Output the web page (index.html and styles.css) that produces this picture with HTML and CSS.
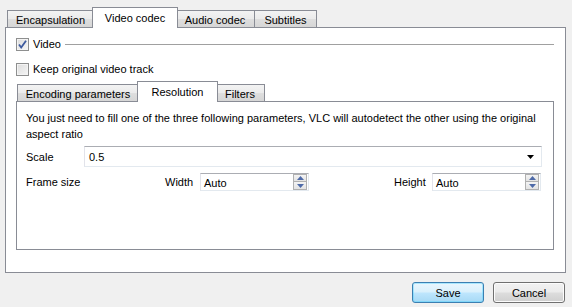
FILE: index.html
```html
<!DOCTYPE html>
<html>
<head>
<meta charset="utf-8">
<link rel="stylesheet" href="styles.css">
</head>
<body>
<div class="dialog">
  <div class="tabbar outer-bar">
    <div class="tab t-encap">Encapsulation</div>
    <div class="tab sel t-video">Video codec</div>
    <div class="tab t-audio">Audio codec</div>
    <div class="tab t-subs">Subtitles</div>
  </div>
  <div class="pane outer-pane">
    <div class="check-row video-row">
      <span class="cb checked">
        <svg width="11" height="11" viewBox="0 0 11 11"><path d="M2 5.5 L4.2 8.5 L9 1.8" fill="none" stroke="#3d5a9e" stroke-width="1.8"/></svg>
      </span>
      <span class="cb-label">Video</span>
      <span class="group-line"></span>
    </div>
    <div class="check-row keep-row">
      <span class="cb"></span>
      <span class="cb-label">Keep original video track</span>
    </div>
    <div class="inner">
      <div class="tabbar inner-bar">
        <div class="tab t-enc">Encoding parameters</div>
        <div class="tab sel t-res">Resolution</div>
        <div class="tab t-fil">Filters</div>
      </div>
      <div class="pane inner-pane">
        <p class="hint">You just need to fill one of the three following parameters, VLC will autodetect the other using the original aspect ratio</p>
        <div class="row scale-row">
          <span class="lbl scale-lbl">Scale</span>
          <div class="combo">
            <span>0.5</span>
            <svg class="arrow" width="8" height="4" viewBox="0 0 8 4"><path d="M0 0 H7 L3.5 4 Z" fill="#000"/></svg>
          </div>
        </div>
        <div class="row frame-row">
          <span class="lbl frame-lbl">Frame size</span>
          <span class="lbl width-lbl">Width</span>
          <div class="spin">
            <span class="spin-val">Auto</span>
            <span class="spin-btns">
              <span class="sb"><svg width="7" height="4" viewBox="0 0 7 4"><path d="M0 4 H7 L3.5 0 Z" fill="#4e6aa8"/></svg></span>
              <span class="sb"><svg width="7" height="4" viewBox="0 0 7 4"><path d="M0 0 H7 L3.5 4 Z" fill="#4e6aa8"/></svg></span>
            </span>
          </div>
          <span class="lbl height-lbl">Height</span>
          <div class="spin">
            <span class="spin-val">Auto</span>
            <span class="spin-btns">
              <span class="sb"><svg width="7" height="4" viewBox="0 0 7 4"><path d="M0 4 H7 L3.5 0 Z" fill="#4e6aa8"/></svg></span>
              <span class="sb"><svg width="7" height="4" viewBox="0 0 7 4"><path d="M0 0 H7 L3.5 4 Z" fill="#4e6aa8"/></svg></span>
            </span>
          </div>
        </div>
      </div>
    </div>
  </div>
  <div class="buttons">
    <button class="btn default">Save</button>
    <button class="btn">Cancel</button>
  </div>
</div>
</body>
</html>
```

FILE: styles.css
```css
* { box-sizing: border-box; }
html, body { margin: 0; padding: 0; }
body {
  background: #f0f0f0;
  font-family: "Liberation Sans", Arial, sans-serif;
  font-size: 11px;
  color: #000;
  width: 572px;
  height: 307px;
  overflow: hidden;
}
.dialog { padding: 0 6px 0 5px; }

.tabbar { display: flex; align-items: flex-end; position: relative; z-index: 1; }
.outer-bar { height: 27px; padding-left: 2px; }
.inner-bar { height: 20px; padding-left: 1px; }

.tab {
  border: 1px solid #898c95;
  border-bottom: none;
  background: linear-gradient(#f3f3f3 0%, #ebebeb 48%, #dedede 52%, #d6d6d6 100%);
  height: 17px;
  display: flex;
  align-items: center;
  justify-content: center;
  margin-left: -1px;
  padding-top: 2px;
}
.tab:first-child { margin-left: 0; }
.tab.sel {
  background: #fff;
  height: 21px;
  margin-bottom: -1px;
  margin-left: -2px;
  margin-right: -2px;
  position: relative;
  z-index: 2;
  padding-bottom: 3px;
}
.t-encap { width: 87px; }
.t-video { width: 86px; }
.t-audio { width: 80px; }
.t-subs { width: 63px; }
.t-enc { width: 122px; }
.t-res { width: 81px; }
.t-fil { width: 50px; }

.pane { background: #fff; border: 1px solid #898c95; }
.outer-pane { height: 246px; padding: 9px 10px 0 10px; }

.check-row { display: flex; align-items: center; height: 14px; }
.video-row { margin-bottom: 11px; }
.keep-row { margin-bottom: 5px; }
.cb {
  width: 13px; height: 13px;
  border: 1px solid #8e8f8f;
  background: linear-gradient(135deg, #dcdcdc, #f6f6f6);
  box-shadow: inset 0 0 0 1px #f4f4f4;
  display: inline-flex;
  flex: none;
}
.cb.checked svg { display: block; }
.cb-label { margin-left: 4px; }
.group-line { flex: 1; height: 1px; background: #a0a0a0; margin-left: 4px; margin-right: 1px; }

.inner { margin-right: 1px; }
.inner-pane { height: 149px; padding: 8px 9px 0 9px; }
.hint { margin: 0; line-height: 16px; }
.row { display: flex; align-items: center; }
.scale-row { margin-top: 4px; height: 21px; }
.scale-lbl { width: 58px; }
.combo {
  flex: 1;
  height: 21px;
  margin-right: 2px;
  border: 1px solid #abadb3;
  border-color: #abadb3 #e3e9ef #e3e9ef #e2e3ea;
  display: flex;
  align-items: center;
  padding: 1px 6px 0 4px;
  justify-content: space-between;
}
.frame-row { margin-top: 6px; height: 18px; }
.frame-lbl { width: 139px; }
.width-lbl { width: 35px; }
.height-lbl { margin-left: 85px; width: 38px; }
.spin {
  width: 109px;
  height: 18px;
  border: 1px solid #abadb3;
  border-color: #abadb3 #e3e9ef #e3e9ef #e2e3ea;
  display: flex;
  align-items: center;
  padding-left: 3px;
}
.spin-val { flex: 1; padding-top: 2px; }
.spin-btns { display: flex; flex-direction: column; width: 14px; height: 16px; margin-right: 1px; }
.sb {
  height: 8px;
  border: 1px solid #b0b0b0;
  background: linear-gradient(#f4f4f4, #e3e3e3);
  display: flex; align-items: center; justify-content: center;
}
.sb + .sb { border-top: none; }
.sb svg { display: block; }

.buttons { display: flex; justify-content: flex-end; gap: 9px; margin-top: 9px; padding-right: 1px; }
.btn {
  font-family: inherit;
  font-size: 11px;
  height: 21px;
  border: 1px solid #707070;
  border-radius: 3px;
  background: linear-gradient(#f2f2f2 0%, #ebebeb 48%, #dddddd 52%, #cfcfcf 100%);
  box-shadow: inset 0 0 0 1px #fcfcfc;
  padding: 0;
  color: #000;
}
.btn.default {
  width: 72px;
  border-color: #3c7fb1;
  background: linear-gradient(#eaf6fd 0%, #d9f0fc 48%, #bee6fd 52%, #a7d9f5 100%);
  box-shadow: inset 0 0 0 1px #48d1ff66;
}
.btn:not(.default) { width: 72px; }
```
